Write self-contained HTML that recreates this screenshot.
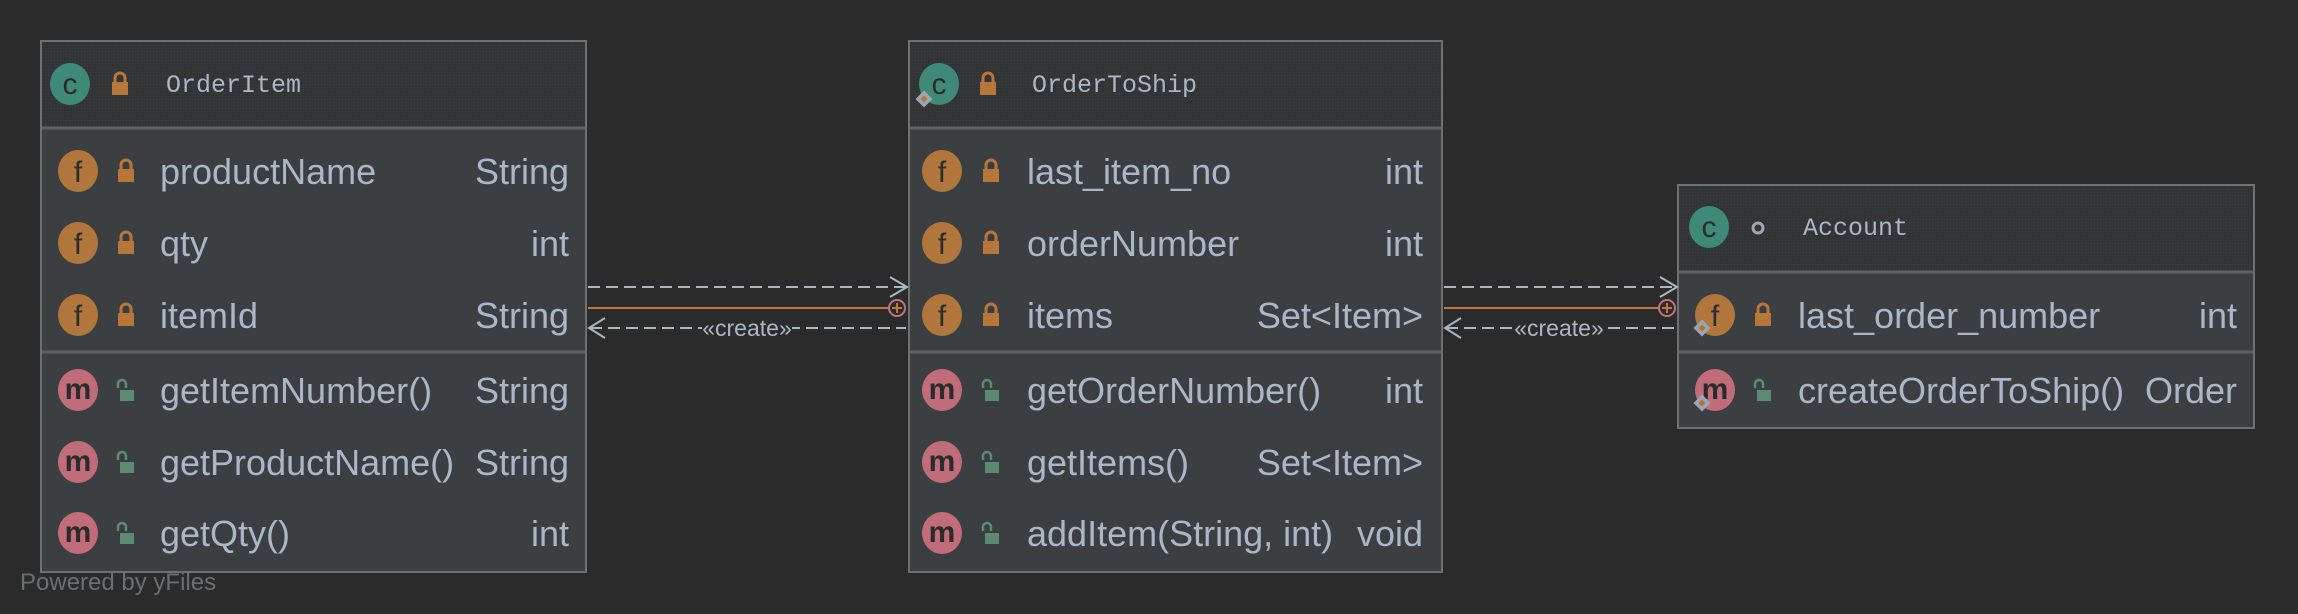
<!DOCTYPE html>
<html><head><meta charset="utf-8"><style>
html,body{margin:0;padding:0;background:#2b2b2b;width:2298px;height:614px;overflow:hidden}
svg{display:block}
.t{font-family:"Liberation Sans",sans-serif;font-size:36px;fill:#a9b7c6}
.h{font-family:"Liberation Mono",monospace;font-size:25px;fill:#a9b7c6}
.ic{font-family:"Liberation Sans",sans-serif;font-size:30px;fill:#2b2b2b;text-anchor:middle}
</style></head><body>
<svg width="2298" height="614" viewBox="0 0 2298 614">
<defs>
<pattern id="dots" width="3" height="3" patternUnits="userSpaceOnUse"><rect width="3" height="3" fill="#323436"/><rect width="1" height="1" fill="#3a3c3e"/></pattern>
<g id="lock"><rect x="-8" y="-4" width="16" height="13" fill="#b7773a"/><path d="M-5,-4 v-4 a5,5 0 0 1 10,0 v4" fill="none" stroke="#b7773a" stroke-width="3"/></g>
<g id="ulock"><rect x="-6" y="-2" width="14" height="11" fill="#5d8a72"/><path d="M-8,-4 v-4 a4,4 0 0 1 8,0 v4" fill="none" stroke="#5d8a72" stroke-width="2.5"/></g>
<g id="fi"><ellipse rx="20" ry="21" fill="#b0763c"/><text class="ic" y="11">f</text></g>
<g id="mi"><ellipse rx="20" ry="21" fill="#c06d79"/><text class="ic" y="9" style="font-size:30px;font-weight:bold">m</text></g>
<g id="ci"><ellipse rx="20" ry="21" fill="#3f8a77"/><text class="ic" y="10" style="font-size:30px">c</text></g>
<g id="dia"><rect x="-6" y="-6" width="12" height="12" fill="#9aa6b2" transform="rotate(45)"/><rect x="-2.5" y="-2.5" width="5" height="5" fill="#b0763c" transform="rotate(45)"/></g>
</defs>

<!-- Box 1 -->
<rect x="41" y="41" width="545" height="531" fill="#3c3f41" stroke="#707070" stroke-width="2"/>
<rect x="42" y="42" width="543" height="85" fill="url(#dots)"/>
<line x1="42" y1="128" x2="585" y2="128" stroke="#5e6062" stroke-width="3"/>
<line x1="42" y1="352" x2="585" y2="352" stroke="#5e6062" stroke-width="3"/>
<use href="#ci" x="70" y="84"/><use href="#lock" x="120" y="86"/>
<text class="h" x="166" y="92">OrderItem</text>
<use href="#fi" x="78" y="171"/><use href="#lock" x="126" y="173"/><text class="t" x="160" y="184">productName</text><text class="t" x="569" y="184" text-anchor="end">String</text>
<use href="#fi" x="78" y="243"/><use href="#lock" x="126" y="245"/><text class="t" x="160" y="256">qty</text><text class="t" x="569" y="256" text-anchor="end">int</text>
<use href="#fi" x="78" y="315"/><use href="#lock" x="126" y="317"/><text class="t" x="160" y="328">itemId</text><text class="t" x="569" y="328" text-anchor="end">String</text>
<use href="#mi" x="78" y="390"/><use href="#ulock" x="126" y="392"/><text class="t" x="160" y="403">getItemNumber()</text><text class="t" x="569" y="403" text-anchor="end">String</text>
<use href="#mi" x="78" y="462"/><use href="#ulock" x="126" y="464"/><text class="t" x="160" y="475">getProductName()</text><text class="t" x="569" y="475" text-anchor="end">String</text>
<use href="#mi" x="78" y="533"/><use href="#ulock" x="126" y="535"/><text class="t" x="160" y="546">getQty()</text><text class="t" x="569" y="546" text-anchor="end">int</text>

<!-- Box 2 -->
<rect x="909" y="41" width="533" height="531" fill="#3c3f41" stroke="#707070" stroke-width="2"/>
<rect x="910" y="42" width="531" height="85" fill="url(#dots)"/>
<line x1="910" y1="128" x2="1441" y2="128" stroke="#5e6062" stroke-width="3"/>
<line x1="910" y1="352" x2="1441" y2="352" stroke="#5e6062" stroke-width="3"/>
<use href="#ci" x="939" y="84"/><use href="#dia" x="924" y="99"/><use href="#lock" x="988" y="86"/>
<text class="h" x="1032" y="92">OrderToShip</text>
<use href="#fi" x="942" y="171"/><use href="#lock" x="991" y="173"/><text class="t" x="1027" y="184">last_item_no</text><text class="t" x="1423" y="184" text-anchor="end">int</text>
<use href="#fi" x="942" y="243"/><use href="#lock" x="991" y="245"/><text class="t" x="1027" y="256">orderNumber</text><text class="t" x="1423" y="256" text-anchor="end">int</text>
<use href="#fi" x="942" y="315"/><use href="#lock" x="991" y="317"/><text class="t" x="1027" y="328">items</text><text class="t" x="1423" y="328" text-anchor="end">Set&lt;Item&gt;</text>
<use href="#mi" x="942" y="390"/><use href="#ulock" x="991" y="392"/><text class="t" x="1027" y="403">getOrderNumber()</text><text class="t" x="1423" y="403" text-anchor="end">int</text>
<use href="#mi" x="942" y="462"/><use href="#ulock" x="991" y="464"/><text class="t" x="1027" y="475">getItems()</text><text class="t" x="1423" y="475" text-anchor="end">Set&lt;Item&gt;</text>
<use href="#mi" x="942" y="533"/><use href="#ulock" x="991" y="535"/><text class="t" x="1027" y="546">addItem(String, int)</text><text class="t" x="1423" y="546" text-anchor="end">void</text>

<!-- Box 3 -->
<rect x="1678" y="185" width="576" height="243" fill="#3c3f41" stroke="#707070" stroke-width="2"/>
<rect x="1679" y="186" width="574" height="85" fill="url(#dots)"/>
<line x1="1679" y1="272" x2="2253" y2="272" stroke="#5e6062" stroke-width="3"/>
<line x1="1679" y1="352" x2="2253" y2="352" stroke="#5e6062" stroke-width="3"/>
<use href="#ci" x="1709" y="227"/>
<circle cx="1758" cy="228" r="5" fill="none" stroke="#9aa6b2" stroke-width="3"/>
<text class="h" x="1803" y="235">Account</text>
<use href="#fi" x="1715" y="315"/><use href="#dia" x="1702" y="328"/><use href="#lock" x="1763" y="317"/><text class="t" x="1798" y="328">last_order_number</text><text class="t" x="2237" y="328" text-anchor="end">int</text>
<use href="#mi" x="1715" y="390"/><use href="#dia" x="1702" y="403"/><use href="#ulock" x="1763" y="392"/><text class="t" x="1798" y="403">createOrderToShip()</text><text class="t" x="2237" y="403" text-anchor="end">Order</text>

<!-- Connectors -->
<g stroke="#a9b7c6" stroke-width="2" fill="none">
<line x1="588" y1="287" x2="906" y2="287" stroke-dasharray="12,6"/>
<path d="M890,277 L907,287 L890,297"/>
<line x1="590" y1="328" x2="906" y2="328" stroke-dasharray="12,6"/>
<path d="M605,318 L589,328 L605,338"/>
<line x1="1444" y1="287" x2="1676" y2="287" stroke-dasharray="12,6"/>
<path d="M1660,277 L1677,287 L1660,297"/>
<line x1="1446" y1="328" x2="1676" y2="328" stroke-dasharray="12,6"/>
<path d="M1461,318 L1445,328 L1461,338"/>
</g>
<line x1="588" y1="308" x2="890" y2="308" stroke="#c0773e" stroke-width="2"/>
<circle cx="897" cy="308" r="8" fill="#2b2b2b" stroke="#c0717a" stroke-width="2"/>
<path d="M892,308h10M897,303v10" stroke="#c0773e" stroke-width="2"/>
<line x1="1444" y1="308" x2="1660" y2="308" stroke="#c0773e" stroke-width="2"/>
<circle cx="1667" cy="308" r="8" fill="#2b2b2b" stroke="#c0717a" stroke-width="2"/>
<path d="M1662,308h10M1667,303v10" stroke="#c0773e" stroke-width="2"/>
<rect x="702" y="318" width="90" height="20" fill="#2b2b2b"/>
<text x="747" y="336" text-anchor="middle" style="font-family:'Liberation Sans',sans-serif;font-size:23px;fill:#a9b7c6">«create»</text>
<rect x="1514" y="318" width="90" height="20" fill="#2b2b2b"/>
<text x="1559" y="336" text-anchor="middle" style="font-family:'Liberation Sans',sans-serif;font-size:23px;fill:#a9b7c6">«create»</text>

<text x="20" y="590" style="font-family:'Liberation Sans',sans-serif;font-size:24px;fill:#6b6e70">Powered by yFiles</text>
</svg>
</body></html>
